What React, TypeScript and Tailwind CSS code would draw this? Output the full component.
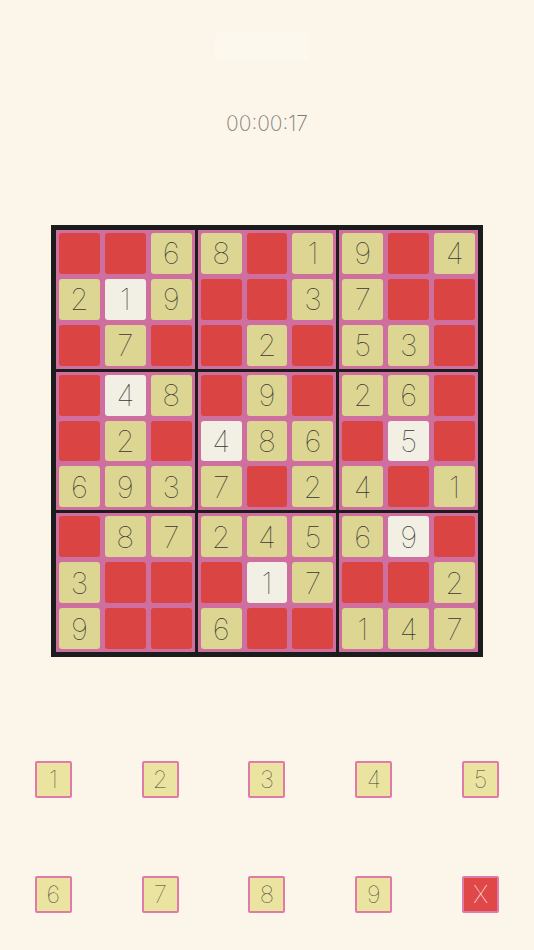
const ROWS = [
  '..68.19.4',
  '219..37..',
  '.7..2.53.',
  '.48.9.26.',
  '.2.486.5.',
  '6937.24.1',
  '.8724569.',
  '3...17..2',
  '9..6..147',
];

// given cells shown in light
const WHITE = new Set(['1-1', '3-1', '4-3', '4-7', '6-7', '7-4']);

const font = { fontFamily: 'Inter, "Open Sans", "Liberation Sans", sans-serif' };

function Cell({ r, c }: { r: number; c: number }) {
  const ch = ROWS[r][c];
  if (ch === '.') return <div className="aspect-square rounded-[3px] bg-[#da4443]" />;
  const white = WHITE.has(`${r}-${c}`);
  return (
    <div
      className={`flex aspect-square items-center justify-center overflow-hidden rounded-[3px] text-[30px] leading-none font-thin text-[#3a3833] ${
        white ? 'bg-[#f2efe4]' : 'bg-[#dcd692]'
      }`}
    >
      {ch}
    </div>
  );
}

function Box({ br, bc }: { br: number; bc: number }) {
  const cells = [];
  for (let i = 0; i < 3; i++)
    for (let j = 0; j < 3; j++) cells.push(<Cell key={`${i}${j}`} r={br * 3 + i} c={bc * 3 + j} />);
  return <div className="grid grid-cols-3 gap-[5px] bg-[#cf6f9f] p-[3px]">{cells}</div>;
}

function Key({ label, clear }: { label: string; clear?: boolean }) {
  return (
    <div className="flex justify-center">
      <div
        className={`flex h-[37px] w-[37px] items-center justify-center rounded-[2px] border-2 border-[#e07aa9] text-[24px] leading-none font-thin ${
          clear ? 'bg-[#e04848] text-white' : 'bg-[#ebe4a0] text-[#44423c]'
        }`}
      >
        {label}
      </div>
    </div>
  );
}

export default function App() {
  const boxes = [];
  for (let i = 0; i < 3; i++) for (let j = 0; j < 3; j++) boxes.push(<Box key={`${i}${j}`} br={i} bc={j} />);

  return (
    <div className="min-h-[950px] w-full overflow-hidden bg-[#fcf5ea]" style={font}>
      <div className="ml-[215px] mt-[33px] h-[28px] w-[93px] rounded-[2px] bg-[#fdf8ee]" />
      <div className="mt-[49px] text-center text-[21px] font-extralight leading-[28px] text-[#7f7c78]">00:00:17</div>
      <div className="mx-auto mt-[87px] grid w-[432px] grid-cols-3 gap-[3px] bg-[#1c1c1c] p-[5px]">{boxes}</div>
      <div className="mt-[104px] grid grid-cols-5">
        {['1', '2', '3', '4', '5'].map((n) => (
          <Key key={n} label={n} />
        ))}
      </div>
      <div className="mt-[78px] grid grid-cols-5">
        {['6', '7', '8', '9'].map((n) => (
          <Key key={n} label={n} />
        ))}
        <Key label="X" clear />
      </div>
    </div>
  );
}
